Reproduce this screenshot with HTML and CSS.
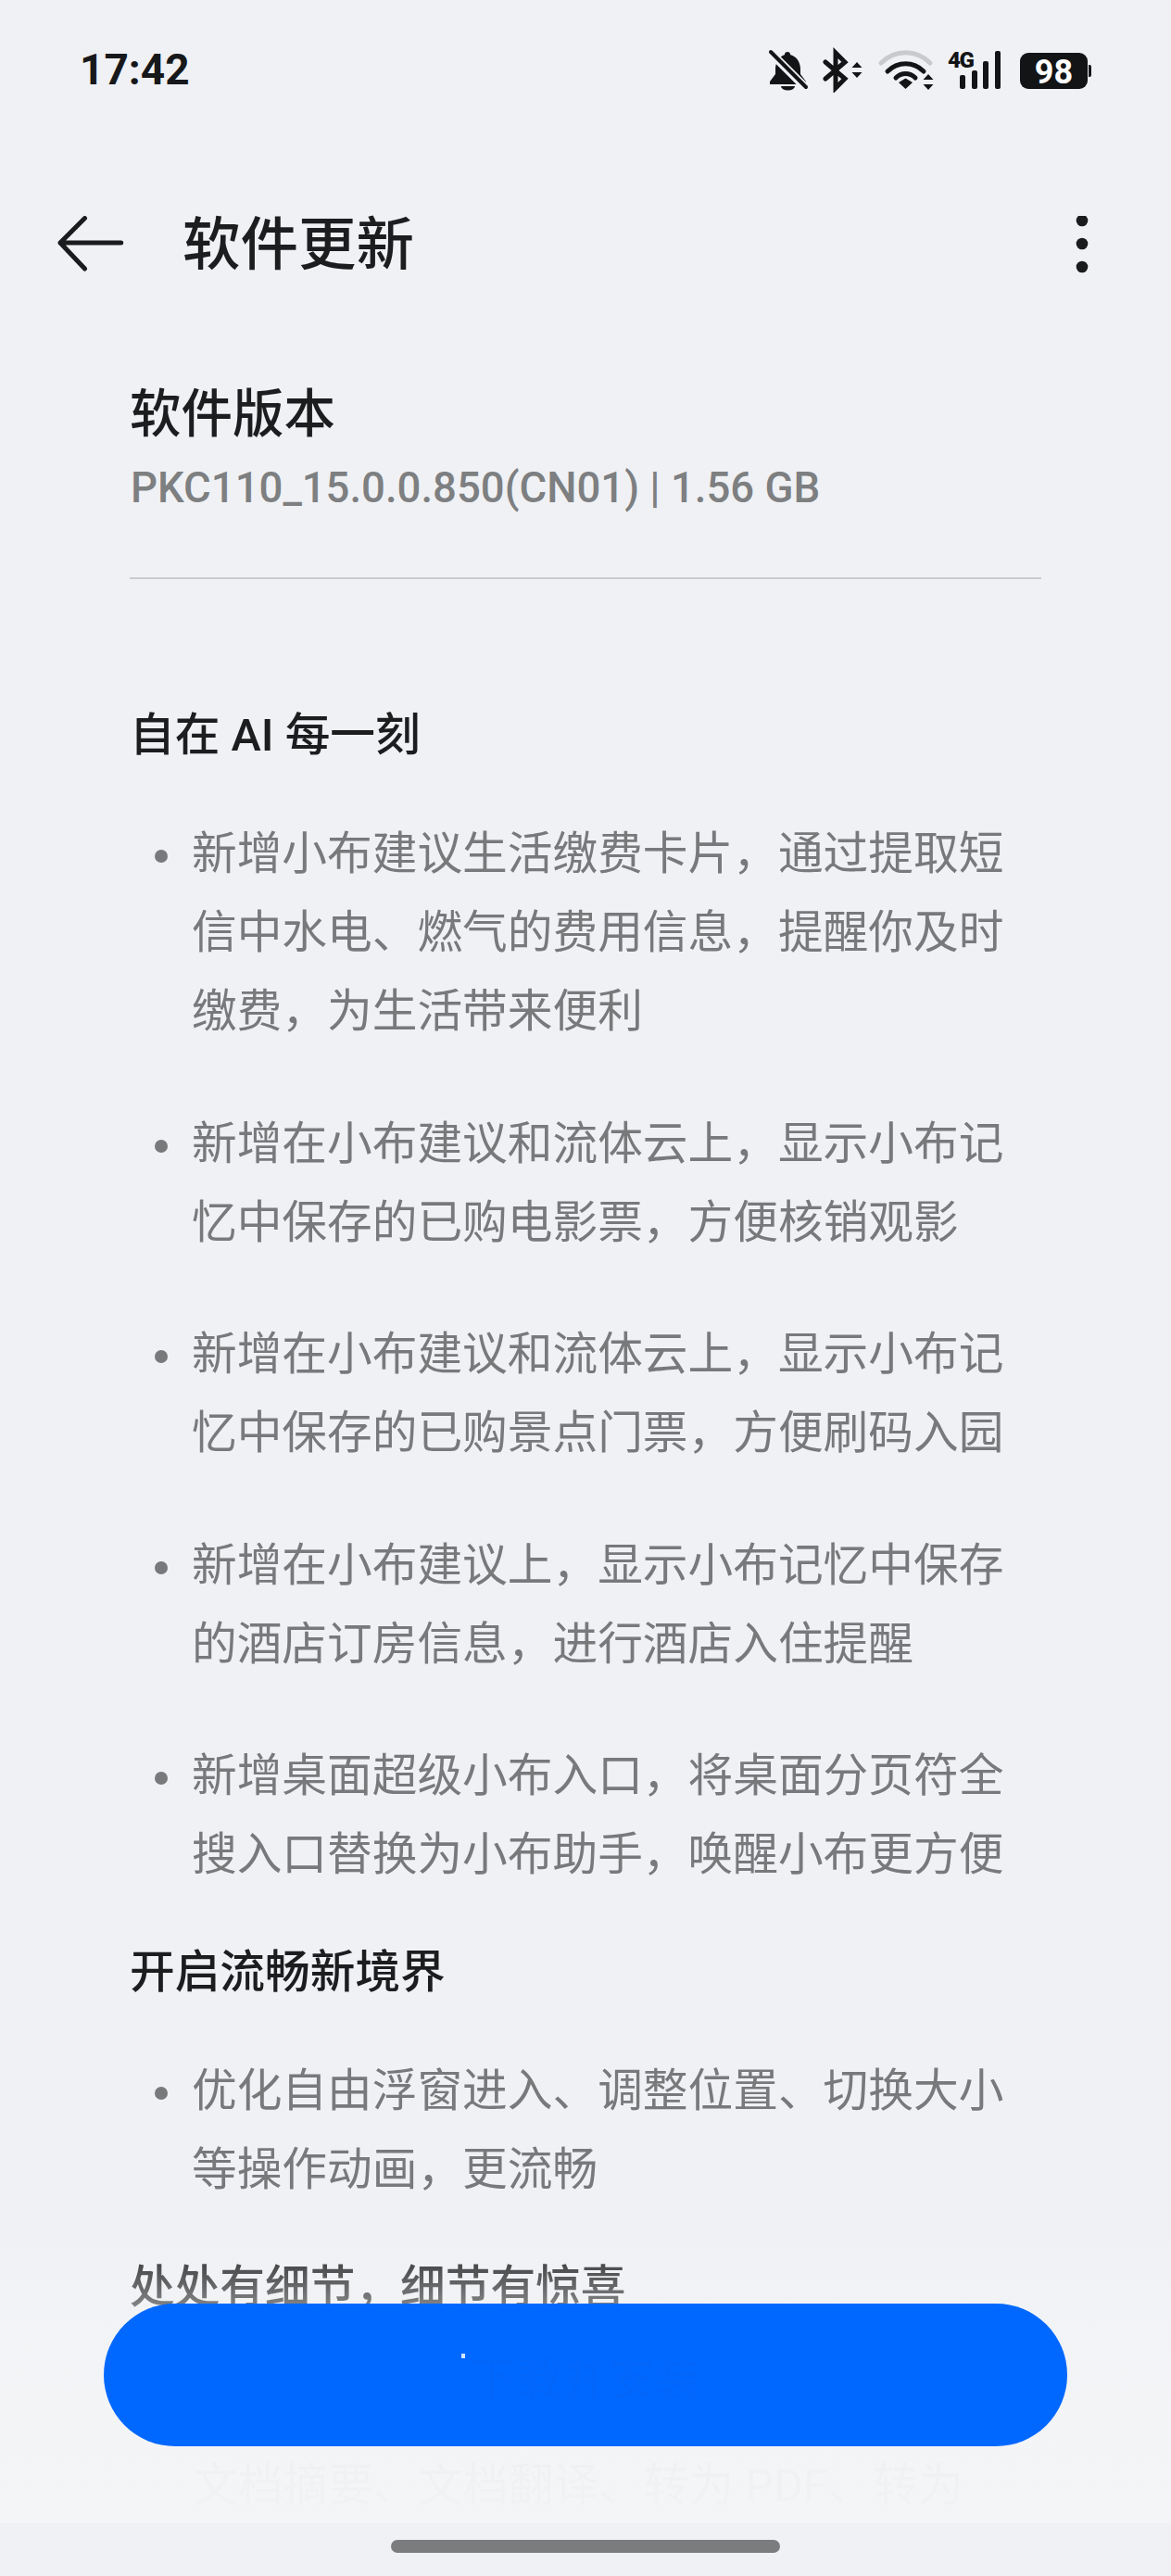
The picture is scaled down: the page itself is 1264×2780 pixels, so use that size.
FILE: index.html
```html
<!DOCTYPE html>
<html lang="zh-CN">
<head>
<meta charset="utf-8">
<title>软件更新</title>
<link rel="stylesheet" href="styles.css">
</head>
<body>
<div class="phone">
  <header class="status">
    <span class="clock">17:42</span>
    <svg class="status-icons" viewBox="0 0 420 70" width="420" height="70">
      <path class="ink" d="M68 26a3 3 0 0 1 3 3c7 2 11 8 11 16v5l6 8v3H49v-3l6-8v-5c0-8 4-14 10-16a3 3 0 0 1 3-3z"/>
      <path class="ink" d="M61 63h15a7.500 4.500 0 0 1-15 0z"/>
      <path class="halo" d="M49 26l39 39"/>
      <path class="slash" d="M50 26l38 38"/>
      <path class="bt" d="M109 37l21 18-10 10V27l10 10-21 18"/>
      <path class="ink" d="M143 37l5.500 6h-11zM143 54l5.500-6h-11z"/>
      <path class="wifi-off" d="M169 38c15-15 38-15 53 0"/>
      <path class="wifi" d="M176 47c11-11 28-11 39 0"/>
      <path class="wifi" d="M185 54c6-6 15-6 21 0"/>
      <path class="ink" d="M188 59l7.500-4.500 7.500 4.500-7.500 7z"/>
      <path class="ink" d="M220 50l5.500 6h-11zM220 67l5.500-6h-11z"/>
      <text class="net" x="241" y="43">4G</text>
      <rect class="ink" x="254" y="51" width="6" height="15" rx="2"/>
      <rect class="ink" x="267" y="46" width="6" height="20" rx="2"/>
      <rect class="ink" x="279" y="36" width="6" height="30" rx="2"/>
      <rect class="ink" x="292" y="25" width="6" height="41" rx="2"/>
      <rect class="ink" x="319" y="27" width="73" height="39" rx="9"/>
      <path class="ink" d="M393 40h1a2 2 0 0 1 2 2v9a2 2 0 0 1-2 2h-1z"/>
      <text class="level" x="355.500" y="59.500">98</text>
    </svg>
  </header>

  <nav class="appbar">
    <svg class="back" viewBox="0 0 80 64" width="80" height="64">
      <path d="M30.500 2.600L4 29l26.500 28M4 29h65.700"/>
    </svg>
    <h1 class="title">软件更新</h1>
    <svg class="more" viewBox="0 0 14 64" width="14" height="64">
      <circle cx="7" cy="5" r="6.300"/><circle cx="7" cy="30" r="6.300"/><circle cx="7" cy="55" r="6.300"/>
    </svg>
  </nav>

  <main class="content">
    <section class="version">
      <h2 class="version-title">软件版本</h2>
      <p class="version-meta">PKC110_15.0.0.850(CN01) | 1.56 GB</p>
    </section>

    <h3 class="head head-first">自在 AI 每一刻</h3>
    <ul class="notes">
      <li>新增小布建议生活缴费卡片，通过提取短信中水电、燃气的费用信息，提醒你及时缴费，为生活带来便利</li>
      <li>新增在小布建议和流体云上，显示小布记忆中保存的已购电影票，方便核销观影</li>
      <li>新增在小布建议和流体云上，显示小布记忆中保存的已购景点门票，方便刷码入园</li>
      <li>新增在小布建议上，显示小布记忆中保存的酒店订房信息，进行酒店入住提醒</li>
      <li>新增桌面超级小布入口，将桌面分页符全搜入口替换为小布助手，唤醒小布更方便</li>
    </ul>

    <h3 class="head">开启流畅新境界</h3>
    <ul class="notes">
      <li>优化自由浮窗进入、调整位置、切换大小等操作动画，更流畅</li>
    </ul>

    <h3 class="head">处处有细节，细节有惊喜</h3>
    <p class="tail">文档摘要、文档翻译、转为 PDF、转为</p>
  </main>

  <div class="fade"></div>
  <button class="cta" type="button"><i class="spark"></i><span class="cta-label">下载并安装</span></button>
  <div class="homebar"><span class="handle"></span></div>
</div>
</body>
</html>
```

FILE: styles.css
```css
* { box-sizing: border-box; }
html, body { margin: 0; padding: 0; }
body {
  background: #f0f1f4;
  font-family: "Roboto", "Noto Sans CJK SC", sans-serif;
}
.phone {
  position: relative;
  width: 1264px;
  height: 2780px;
  overflow: hidden;
  background: #f0f1f4;
}

/* status bar */
.status {
  height: 100px;
  padding: 30px 62px 0 86px;
  display: flex;
  justify-content: space-between;
  align-items: flex-start;
}
.clock {
  font-size: 46px;
  line-height: 90px;
  font-weight: 700;
  color: #17181a;
  height: 90px;
}
.status-icons { display: block; flex: none; }
.ink { fill: #131416; }
.halo { stroke: #f0f1f4; stroke-width: 9; fill: none; }
.slash { stroke: #131416; stroke-width: 4; fill: none; stroke-linecap: round; }
.bt { stroke: #131416; stroke-width: 5; fill: none; stroke-linecap: round; stroke-linejoin: miter; }
.wifi { stroke: #131416; stroke-width: 5; fill: none; stroke-linecap: round; }
.wifi-off { stroke: #c9cacc; stroke-width: 5; fill: none; stroke-linecap: round; }
.net { font-family: "Roboto", sans-serif; font-size: 24px; font-weight: 900; fill: #131416; letter-spacing: -1.500px; }
.level { font-family: "Roboto", sans-serif; font-size: 36px; font-weight: 700; fill: #fff; text-anchor: middle; }

/* app bar */
.appbar {
  margin-top: 133px;
  height: 64px;
  padding: 0 89px 0 61px;
  display: flex;
  align-items: center;
}
.back { flex: none; display: block; }
.back path { stroke: #1a1b1d; stroke-width: 5; fill: none; stroke-linecap: round; stroke-linejoin: round; }
.title {
  margin: 0 0 0 56px;
  flex: 1;
  font-size: 62.500px;
  line-height: 64px;
  font-weight: 500;
  color: #1c1d1f;
}
.more { flex: none; display: block; fill: #1a1b1d; }

/* content */
.content { padding: 0 140px 0 140px; }
.version { border-bottom: 2px solid #cbccce; padding: 113px 0 64px; width: 984px; }
.version-title {
  margin: 0;
  font-size: 55.500px;
  line-height: 76px;
  font-weight: 500;
  color: #1c1d1f;
}
.version-meta {
  margin: 9px 0 0 1px;
  font-size: 45.500px;
  line-height: 64px;
  font-weight: 500;
  color: #7d7f81;
}
.head {
  margin: 0;
  font-size: 48.700px;
  line-height: 72px;
  font-weight: 500;
  color: #1c1d1f;
}
.head-first { margin-top: 133px; }
.notes {
  list-style: none;
  margin: 49px 0 0;
  padding: 0 0 0 67px;
  display: flex;
  flex-direction: column;
  gap: 57.500px;
}
.notes + .head { margin-top: 49px; }
.notes li {
  position: relative;
  font-size: 48.700px;
  line-height: 85px;
  font-weight: 400;
  color: #77797b;
}
.notes li::before {
  content: "";
  position: absolute;
  left: -40px;
  top: 38px;
  width: 14px;
  height: 14px;
  border-radius: 50%;
  background: #77797b;
}
.tail {
  margin: 135px 0 0 68px;
  font-size: 48.700px;
  line-height: 85px;
  font-weight: 400;
  color: #77797b;
  white-space: nowrap;
}

/* bottom overlay */
.fade {
  position: absolute;
  left: 0;
  right: 0;
  top: 2410px;
  height: 313px;
  background: linear-gradient(to bottom, rgba(243, 245, 247, 0) 0%, rgba(243, 245, 247, .45) 24%, rgba(243, 245, 247, .96) 75%, rgba(243, 245, 247, .98) 100%);
}
.cta {
  position: absolute;
  left: 112px;
  top: 2486px;
  width: 1040px;
  height: 154px;
  border: 0;
  padding: 0;
  border-radius: 77px;
  background: #0068ff;
  font-family: "Noto Sans CJK SC", sans-serif;
  display: flex;
  align-items: center;
  justify-content: center;
}
.cta-label { font-size: 50px; line-height: 70px; color: #0266fb; }
.spark {
  position: absolute;
  left: 386px;
  top: 54px;
  width: 4px;
  height: 5px;
  background: #cfe6ff;
}
.homebar {
  position: absolute;
  left: 0;
  right: 0;
  top: 2723px;
  height: 57px;
  background: #f0f1f4;
  display: flex;
  justify-content: center;
  padding-top: 18px;
}
.handle { width: 420px; height: 14px; border-radius: 7px; background: #7b7c7e; }
```
